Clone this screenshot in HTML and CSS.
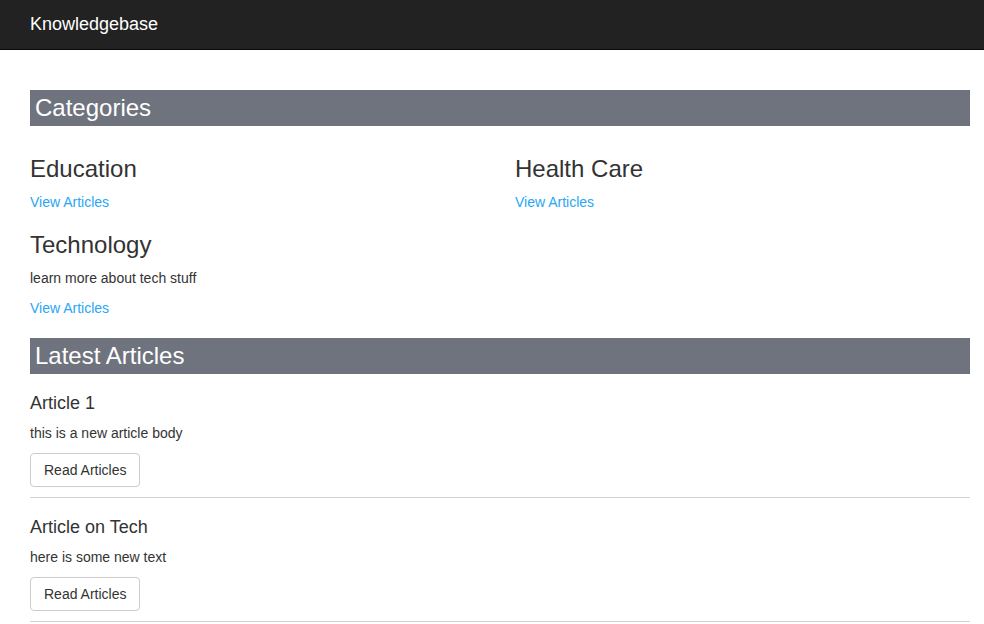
FILE: index.html
```html
<!DOCTYPE html>
<html>
<head>
<meta charset="utf-8">
<title>Knowledgebase</title>
<link rel="stylesheet" href="styles.css">
</head>
<body>
<nav class="navbar">
  <a class="brand" href="#">Knowledgebase</a>
</nav>
<main class="container">
  <h2 class="bar bar-first">Categories</h2>
  <div class="cats">
    <div class="cat">
      <h3>Education</h3>
      <a class="link" href="#">View Articles</a>
    </div>
    <div class="cat">
      <h3>Health Care</h3>
      <a class="link" href="#">View Articles</a>
    </div>
    <div class="cat">
      <h3>Technology</h3>
      <p class="desc">learn more about tech stuff</p>
      <a class="link" href="#">View Articles</a>
    </div>
  </div>
  <h2 class="bar bar-second">Latest Articles</h2>
  <div class="articles">
    <div class="article">
      <h4>Article 1</h4>
      <p class="desc">this is a new article body</p>
      <a class="btn" href="#">Read Articles</a>
    </div>
    <div class="article">
      <h4>Article on Tech</h4>
      <p class="desc">here is some new text</p>
      <a class="btn" href="#">Read Articles</a>
    </div>
  </div>
</main>
</body>
</html>
```
FILE: styles.css
```css
* { box-sizing: border-box; }
html, body { margin: 0; padding: 0; }
body {
  font-family: "Liberation Sans", Arial, sans-serif;
  font-size: 14px;
  line-height: 20px;
  color: #333;
  background: #fff;
}
.navbar {
  height: 50px;
  background: #222;
  border-bottom: 1px solid #080808;
  display: flex;
  align-items: center;
  padding: 0 30px;
}
.brand {
  color: #fff;
  font-size: 18px;
  line-height: 20px;
  text-decoration: none;
  padding-bottom: 2px;
}
.container {
  padding: 0 14px 0 30px;
  display: flex;
  flex-direction: column;
}
.bar {
  margin: 0;
  background: #6f737e;
  color: #fff;
  font-size: 24px;
  font-weight: normal;
  line-height: 26px;
  padding: 5px 5px;
}
.bar-first { margin-top: 40px; }
.bar-second { margin-top: 20px; }
.cats {
  display: grid;
  grid-template-columns: 485px 455px;
  padding-top: 30px;
}
.cat { display: flex; flex-direction: column; align-items: flex-start; }
.cat:nth-child(3) { padding-top: 20px; }
.cat h3 {
  margin: 0 0 10px;
  font-size: 24px;
  font-weight: normal;
  line-height: 26px;
}
.desc { margin: 0 0 10px; }
.link {
  color: #29a6f5;
  text-decoration: none;
}
.articles { display: flex; flex-direction: column; }
.article {
  display: flex;
  flex-direction: column;
  align-items: flex-start;
  padding: 19px 0 10px;
  border-bottom: 1px solid #d3d3d3;
}
.article + .article { padding-top: 19px; }
.article h4 {
  margin: 0 0 10px;
  font-size: 18px;
  font-weight: normal;
  line-height: 20px;
}
.btn {
  display: inline-block;
  height: 34px;
  padding: 6px 13px;
  font-size: 14px;
  line-height: 20px;
  color: #333;
  background: #fff;
  border: 1px solid #ccc;
  border-radius: 4px;
  text-decoration: none;
}
```
